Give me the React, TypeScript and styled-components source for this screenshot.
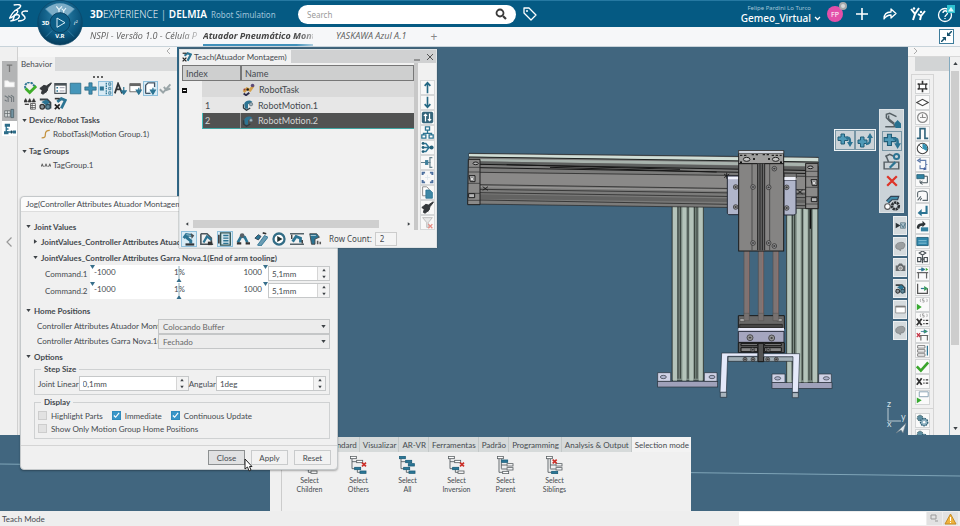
import React, { useState } from "react";
import styled, { createGlobalStyle, css } from "styled-components";

const teal = "#2c7493";
const ink = "#454a4f";
const sky = "#41667f";

const GlobalStyle = createGlobalStyle`
  *, *::before, *::after { box-sizing: border-box; }
  body { margin: 0; font-family: Lato, "Open Sans", sans-serif; font-size: 8px; color: ${ink}; }
  button, input, select { font: inherit; color: inherit; margin: 0; padding: 0; border-radius: 0; }
  button { background: none; border: 0; }
  h1, h2, h3, p, ul { margin: 0; padding: 0; font: inherit; list-style: none; }
`;

/* ---------- icons ---------- */

const arm = (
  <>
    <path d="M2 7 5 3l6 1M6 4v3l4 3v3" fill="none" stroke={teal} strokeWidth="3.400" />
    <path d="M4 13h10v2.500H4z" fill="#2f3437" />
    <path d="M10 1l4 3-3 4z" fill="#4a5054" />
    <path d="M5 3l5 1" stroke="#a7c8d6" />
  </>
);

const icons: Record<string, React.ReactNode> = {
  check: (
    <>
      <path d="M2 8a5 5 0 0 1 9-5l3 3" fill="none" stroke={teal} strokeWidth="2.400" strokeDasharray="3 1" />
      <path d="M2 8l5 5 8-8" fill="none" stroke="#3fae2a" strokeWidth="3.400" />
    </>
  ),
  brush: <path d="M15 1 9 5 6 4 1 8l3 2-1 4 2 1 5-4 1-4 4-5zM2 8l7 5" fill="#35393c" stroke="#35393c" strokeWidth="1.200" />,
  panel: (
    <>
      <path d="M1 2h14v12H1z" fill="#fff" stroke="#4b5358" strokeWidth="1.400" />
      <path d="M1 2h14v2.500H1z" fill="#4b5358" />
      <path d="M3 7h2M3 11h2" stroke={teal} strokeWidth="2" />
      <path d="M7 7h6M7 11h6" stroke="#889" />
    </>
  ),
  box: <path d="M1.500 1.500h13v13h-13z" fill="#4596ba" stroke="#2b6c88" />,
  plus: <path d="M6 1h4v5h5v4h-5v5H6v-5H1V6h5z" fill="#3f8fb3" stroke="#245f7a" strokeWidth=".8" />,
  nodes: (
    <>
      <path d="M1 5.500h5v5H1z" fill={teal} />
      <path d="M9 1v14" stroke={teal} strokeWidth="1.600" strokeDasharray="2 1" />
      <path d="M12 1h2.500v3H12zM12 6.500h2.500v3H12zM12 12h2.500v3H12z" fill="none" stroke={teal} />
    </>
  ),
  text: (
    <>
      <path d="M1 14 5 2l5 12M3 9h5" fill="none" stroke="#303437" strokeWidth="2.200" />
      <path d="M12 6v6m-3-1 3 4 3-4z" fill={teal} stroke={teal} strokeWidth="1.500" />
    </>
  ),
  windowDown: (
    <>
      <path d="M1 2h13v10H1z" fill="#fff" stroke="#555" />
      <path d="M1 2h13v3H1z" fill="#666" />
      <path d="M12 7v4m-3-1 3 5 3-5z" fill={teal} stroke={teal} strokeWidth="1.400" />
    </>
  ),
  pageDown: (
    <>
      <path d="M2 14V4l3-3h8v5M2 14h6" fill="#fff" stroke="#456" strokeWidth="1.600" />
      <path d="M11 7v4m-3-1 3 5 3-5z" fill={teal} stroke={teal} strokeWidth="1.400" />
    </>
  ),
  fade: <path d="M1 9l4 4 9-10M6 6l3 4 5-2" fill="none" stroke="#9aa5a8" strokeWidth="2.400" />,
  tags: (
    <>
      <path d="M0 6l2-4 2 4zM5 6l2-4 2 4zM10 6l2-4 2 4z" fill="#333" stroke="#333" />
      <path d="M8 8h6v7H8zM8 10.500h6M8 13h6M10 8v7" fill="#fff" stroke="#555" />
      <path d="M1 9h5" stroke="#333" strokeWidth="1.500" />
    </>
  ),
  tagLine: <path d="M0 11l2-5 2 5M6 11l2-5 2 5M12 11l2-5 2 5M1 9h2M7 9h2M13 9h2" fill="none" stroke="#555" strokeWidth="1.300" />,
  robotA: (
    <>
      <path d="M1 3h9l4 4v7" fill="none" stroke="#3b4347" strokeWidth="2.400" />
      <path d="M3 6l6-3 4 3-3 5z" fill={teal} />
      <circle cx="4" cy="12" r="2.800" fill="#8a9499" stroke="#333" strokeWidth="1.500" />
      <circle cx="11" cy="12" r="2.800" fill="#5f8698" stroke="#2c4d5c" strokeWidth="1.500" />
    </>
  ),
  robotB: (
    <>
      <path d="M4 6l5-4 5 2-3 6-2 4" fill="none" stroke={teal} strokeWidth="3.400" />
      <path d="M1 2h6" stroke="#333" strokeWidth="2" />
      <path d="M1 9l6 6M1 15l6-6" stroke="#222" strokeWidth="2" />
    </>
  ),
  robotC: arm,
  robotD: (
    <>
      <path d="M1 2h7l5 5v7M1 2v12h14" fill="none" stroke="#4c565c" strokeWidth="1.800" />
      <path d="M4 12l4-7 5 4" fill="none" stroke={teal} strokeWidth="2.600" />
      <path d="M9 11h5v4H9z" fill="#333" />
    </>
  ),
  robotE: (
    <>
      <path d="M2 12l4-7 4 1 3 6" fill="none" stroke={teal} strokeWidth="3" />
      <path d="M1 13h5M11 13h5" stroke="#333" strokeWidth="2.400" />
      <circle cx="7" cy="4" r="2.600" fill="#586066" />
    </>
  ),
  robotF: (
    <>
      <path d="M4 15l8-11 4 2-8 10z" fill="#6b9cb3" stroke={teal} />
      <path d="M1 7l4-4 3 2-3 4z" fill={teal} stroke="#345" />
      <path d="M10 1l4 1" stroke="#333" strokeWidth="2" />
    </>
  ),
  robotG: (
    <>
      <path d="M0 2h16M0 14h16" stroke="#56646b" strokeWidth="1.500" />
      <path d="M3 11l4-6 5 2v5" fill="none" stroke={teal} strokeWidth="3.200" />
      <path d="M2 3v5M14 9v4" stroke="#333" strokeWidth="1.500" />
    </>
  ),
  robotH: (
    <>
      <path d="M2 2h8l3 4-5 2v6H4z" fill={teal} stroke="#444" />
      <path d="M3 4h6" stroke="#b5d0da" />
      <path d="M11 10v4M14 11v3" stroke="#555" strokeWidth="1.800" />
    </>
  ),
  listBox: (
    <>
      <path d="M3 1h11v14H3z" fill="#d7e8ef" stroke="#355" strokeWidth="1.600" />
      <path d="M6 4h6M6 7h6M6 10h6M6 13h6" stroke={teal} strokeWidth="1.600" />
      <path d="M1 3v10" stroke="#333" strokeWidth="1.800" />
    </>
  ),
  playRing: (
    <>
      <circle cx="8" cy="8" r="6.300" fill="#fff" stroke="#326d86" strokeWidth="2.600" />
      <path d="M6 4.500l6 3.500-6 3.500z" fill="#233" />
    </>
  ),
  task: (
    <>
      <path d="M2 11l4-4 4 2 4-6" fill="none" stroke="#d4a04a" strokeWidth="3.400" />
      <path d="M2 13l3 2 4-3" fill="none" stroke="#2d2d4d" strokeWidth="2.400" />
      <circle cx="13" cy="3" r="2.200" fill="#5c4a7a" />
      <circle cx="7" cy="8" r="1.500" fill="#222" />
      <circle cx="3" cy="8" r="1.200" fill="#a0413c" />
    </>
  ),
  motion: (
    <>
      <path d="M3 6c2-5 9-5 11-2l-6 3v6H4z" fill={teal} />
      <path d="M2 7v5l4 3 5-3" fill="none" stroke="#2e3b42" strokeWidth="1.800" />
      <circle cx="12" cy="7" r="2.200" fill="#9fb3bd" stroke="#4a5b64" strokeWidth=".8" />
    </>
  ),
  up: <path d="M8 15V2M4.500 6 8 2l3.500 4" fill="none" stroke="#236884" strokeWidth="2" />,
  down: <path d="M8 1v13M4.500 10 8 14l3.500-4" fill="none" stroke="#236884" strokeWidth="2" />,
  swap: (
    <>
      <rect x="1" y="1" width="14" height="14" rx="2" fill="#35657b" />
      <path d="M5.500 13V4m-2 2 2-2 2 2M10.500 3v9m-2-2 2 2 2-2" fill="none" stroke="#fff" strokeWidth="1.500" />
    </>
  ),
  hierarchy: (
    <>
      <path d="M8 5v4M3 12V9h10v3" fill="none" stroke={teal} strokeWidth="1.600" />
      <path d="M5.500 1h5v4h-5zM1 11h5v4H1zM10 11h5v4h-5z" fill="#fff" stroke={teal} strokeWidth="1.600" />
    </>
  ),
  merge: (
    <>
      <path d="M3 3h3l4 5-4 5H3M3 8h11" fill="none" stroke={teal} strokeWidth="1.800" />
      <circle cx="2.500" cy="3" r="1.700" fill="#246079" />
      <circle cx="2.500" cy="8" r="1.700" fill="#246079" />
      <circle cx="2.500" cy="13" r="1.700" fill="#246079" />
      <circle cx="13" cy="8" r="2.500" fill="#246079" />
    </>
  ),
  split: (
    <>
      <path d="M0 8h12M14 2h-3v12h3" fill="none" stroke="#64818e" strokeWidth="1.500" />
      <path d="M5 5h4v6H5z" fill="#3f7f9b" />
    </>
  ),
  corners: (
    <>
      <path d="M2 5V2h3M11 2h3v3M14 11v3h-3M5 14H2v-3" fill="none" stroke="#4c6f9e" strokeWidth="2.400" />
      <path d="M5 8h6M8 5v6" stroke="#dbe5ec" />
    </>
  ),
  pages: (
    <>
      <path d="M2 1h5l3 3v8H2z" fill="#fff" stroke="#777" />
      <path d="M6 5h5l3 3v7H6z" fill="#3f88a6" stroke={teal} />
    </>
  ),
  filterOff: (
    <>
      <path d="M2 2h12l-5 6v6H7V8z" fill="#e8e8e8" stroke="#b5b5b5" />
      <path d="M9 10l5 5M14 10l-5 5" stroke="#e78b82" strokeWidth="1.600" />
    </>
  ),
  gear: (
    <>
      <path d="M8 1v14M2 4.500l12 7M14 4.500l-12 7" stroke="#333" strokeWidth="2" />
      <path d="M4 5h8v6H4z" fill="#fff" stroke="#333" strokeWidth="1.500" />
    </>
  ),
  diamond: <path d="M1 8l7-4 7 4-7 4z" fill="#fff" stroke="#444" strokeWidth="1.300" />,
  clock: (
    <>
      <circle cx="8" cy="8" r="6" fill="none" stroke="#888" strokeWidth="1.500" />
      <path d="M8 4v4h4M5 8h2" fill="none" stroke="#888" strokeWidth="1.400" />
    </>
  ),
  pulse: <path d="M1 14h4V2h6v12h4" fill="none" stroke="#31647c" strokeWidth="2" />,
  timer: (
    <>
      <circle cx="8" cy="8" r="6.500" fill="#fff" stroke="#444" strokeWidth="1.300" />
      <path d="M8 8V2a6 6 0 0 1 5 9z" fill="#3594b5" />
      <path d="M8 8 4 4" stroke="#333" />
    </>
  ),
  loop: (
    <>
      <path d="M5 3h7v5l2 0M12 8v5H5V9M2 3l3-2v4z" fill="none" stroke="#617cab" strokeWidth="1.400" />
      <path d="M10 11l3 3-4 1z" fill="#4560a0" />
    </>
  ),
  call: (
    <>
      <path d="M1 2h9v5H1z" fill="#3184a4" stroke="#245c72" />
      <path d="M10 4h4v8H5v-3M8 10l-3 2 3 2" fill="none" stroke="#46545b" strokeWidth="1.200" />
    </>
  ),
  curve: <path d="M2 10V5c0-3 12-4 12 1v8H8M2 14l4-5M5 14l2-3" fill="none" stroke="#56636a" strokeWidth="1.300" />,
  enter: (
    <>
      <path d="M13 2v9H6" fill="none" stroke={teal} strokeWidth="2.600" />
      <path d="M7 6l-5 5 5 4z" fill={teal} />
    </>
  ),
  jump: (
    <>
      <path d="M6 9h9v5H6z" fill="#35809f" />
      <path d="M1 10c0-5 3-6 7-6V1l4 4-4 4V7C5 7 4 8 4 11z" fill="#2d3336" />
    </>
  ),
  block: (
    <>
      <path d="M1 3h14v10H1z" fill="#2f86aa" stroke="#1e5a74" />
      <path d="M3 7h10M3 10h10" stroke="#9cd0e2" />
    </>
  ),
  branch: <path d="M8 0l4 2.500L8 5 4 2.500zM8 5v10M2 8h4v5H2zM10 8h4v5h-4zM6 10h4" fill="none" stroke="#485055" strokeWidth="1.400" />,
  signal: (
    <>
      <path d="M3 14V7h10v7M1 7h14" fill="none" stroke="#666" strokeWidth="1.500" />
      <path d="M3 3h6M7 1l4 2-4 2z" fill={teal} stroke={teal} />
      <path d="M12 1l3 2-3 2z" fill="#3ead35" />
    </>
  ),
  axisOut: (
    <>
      <path d="M2 2v12h12V8" fill="none" stroke="#555" strokeWidth="1.500" />
      <path d="M6 8h4" stroke={teal} strokeWidth="1.500" />
      <path d="M10 5l5 3-5 3z" fill="#3a9a5c" />
    </>
  ),
  playGreen: (
    <>
      <path d="M1 7l6 4-6 4z" fill="#37a930" />
      <path d="M6 1C5 2 5 4 6 5M10 1H8v2h2v2H8M13 1c1 1 1 3 0 4" fill="none" stroke="#999" />
    </>
  ),
  assignS: (
    <>
      <path d="M1 7l6 8M7 7l-6 8" stroke="#333" strokeWidth="2.200" />
      <path d="M9 9h1.500M9 13h1.500M12 9h3M12 13h3" stroke="#333" strokeWidth="1.500" />
      <path d="M6 1C5 2 5 4 6 5M10 1H8v2h2v2H8M13 1c1 1 1 3 0 4" fill="none" stroke="#999" />
    </>
  ),
  assign: (
    <>
      <path d="M1 4l6 8M7 4l-6 8" stroke="#333" strokeWidth="2.200" />
      <path d="M9 6h1.500M9 10h1.500M12 6h3M12 10h3" stroke="#333" strokeWidth="1.500" />
    </>
  ),
  signalOff: (
    <>
      <path d="M6 14V8h8v6M4 8h11" fill="none" stroke="#666" strokeWidth="1.400" />
      <path d="M1 5l4 5M5 5l-4 5" stroke="#c73244" strokeWidth="1.500" />
      <path d="M6 3h4M10 1l4 2-4 2z" fill="#3ead35" stroke={teal} />
    </>
  ),
  list: (
    <>
      <path d="M2 2h9v3H2zM2 7h9v3H2zM2 12h9v3H2z" fill="#fff" stroke="#666" />
      <path d="M14 2v12" stroke={teal} strokeWidth="1.500" />
    </>
  ),
  tick: <path d="M1 8l5 5 9-10" fill="none" stroke="#3aa52c" strokeWidth="3.200" />,
  commentPlay: (
    <>
      <path d="M4 1h11v6H4z" fill="#fff" stroke="#7593a6" />
      <path d="M1 8l6 3.500L1 15z" fill="#37a930" />
    </>
  ),
  gears: (
    <>
      <circle cx="5" cy="5" r="3.500" fill="#5f8ea2" stroke="#355" strokeDasharray="2 1" />
      <circle cx="10" cy="10" r="4.500" fill="#8fb2c2" stroke="#2b5d73" strokeWidth="1.600" strokeDasharray="2 1" />
      <circle cx="10" cy="10" r="1.500" fill="#fff" />
    </>
  ),
  letterT: <path d="M4 3h8M8 3v10" fill="none" stroke="#777" strokeWidth="1.800" />,
  folder: <path d="M1 4h5l2 2h7v7H1z" fill="#fafafa" stroke="#e4e4e4" />,
  arms: <path d="M1 4l5 3v6M6 4l5 3v6M10 3l4 3v7M1 10l3 2" fill="none" stroke="#6f777b" strokeWidth="1.500" />,
  cabinet: (
    <>
      <path d="M1 4h8v9H1zM1 8h8M5 4v9" fill="#d5d9da" stroke="#5b6165" />
      <path d="M10 2h4v12h-4z" fill="#7394a3" stroke="#43565f" />
    </>
  ),
  flow: (
    <>
      <path d="M3 3v9h12M3 8h3" fill="none" stroke={teal} strokeWidth="1.800" />
      <path d="M1 1h7v4H1zM0 11h6v4H0z" fill="#2d6c88" />
      <path d="M9 10h2v4H9z" fill="#1b4458" />
      <path d="M12 10h4v4h-4z" fill="#2d6c88" />
    </>
  ),
  taskCurve: <path d="M1 14c6 0 6-2 6-6s2-6 7-6" fill="none" stroke="#c4923e" strokeWidth="2" />,
  addPoint: (
    <>
      <path d="M4 2h3.500v3H11v3.500H7.500V12H4V8.500H1V5h3z" fill="#4f9ab8" stroke="#215d77" />
      <path d="M9 6c4-1 4 1 4 5" fill="none" stroke={teal} strokeWidth="2.400" />
      <path d="M10 10h6l-3 5z" fill={teal} />
    </>
  ),
  addPointUp: (
    <>
      <path d="M3.500 5H7v3h3v3.500H7V15H3.500v-3.500H1V8h2.500z" fill="#4f9ab8" stroke="#215d77" />
      <path d="M9 12c4 0 4-2 4-6" fill="none" stroke={teal} strokeWidth="2.400" />
      <path d="M10 6h6l-3-5z" fill={teal} />
    </>
  ),
  armHome: (
    <>
      <path d="M2 14h8v-2L6 9 3 6V3l3-1 6 3M5 4v3l5 4" fill="none" stroke="#555f64" strokeWidth="1.300" />
      <path d="M10 11l3-3 3 3v4h-5z" fill="#27708f" />
    </>
  ),
  armEdit: (
    <>
      <path d="M2 4l4-2 4 2M3 4l2 5M1 9h13v6H1z" fill="none" stroke="#555f64" strokeWidth="1.300" />
      <circle cx="12" cy="4" r="2.300" fill="none" stroke={teal} strokeWidth="1.800" />
      <path d="M6 14l5-5" stroke={teal} strokeWidth="2" />
    </>
  ),
  cross: <path d="M2.500 2.500l11 11M13.500 2.500l-11 11" stroke="#dd3428" strokeWidth="2.600" />,
  armGear: (
    <>
      <path d="M3 7l4-4h7l-1 3H8L5 9" fill="#418aa7" stroke="#345" />
      <circle cx="11" cy="11.500" r="3" fill="none" stroke="#2b2f33" strokeWidth="2.400" strokeDasharray="2 .5" />
      <circle cx="4" cy="12" r="2.500" fill="#fff" stroke="#555" />
    </>
  ),
  flag: (
    <>
      <path d="M1 4l7 4-7 4z" fill="#2c3438" />
      <path d="M8 4h7v8H8z" fill="#a9bfca" stroke="#55707d" />
      <path d="M9 6l3 5 3-6" fill="none" stroke="#2f5a6d" />
    </>
  ),
  shape: <path d="M1 8c0-5 5-6 9-6s5 3 4 6-3 4-5 3l-1 3-3-2c-2 0-4-1-4-4z" fill="#9b9fa1" stroke="#73787b" />,
  camera: (
    <>
      <path d="M1 5h3l2-3h4l2 3h3v8H1z" fill="#666b6e" />
      <circle cx="8" cy="9" r="2.800" fill="#999" stroke="#eee" />
    </>
  ),
  blankWindow: (
    <>
      <path d="M1 3h14v10H1z" fill="#fff" stroke="#777" />
      <path d="M1 3h14v2H1z" fill="#777" />
    </>
  ),
};

const Svg = styled.svg<{ $size: number }>`
  width: ${(p) => p.$size}px;
  height: ${(p) => p.$size}px;
  flex: none;
  display: block;
`;

function Icon({ name, size = 12 }: { name: string; size?: number }) {
  return (
    <Svg $size={size} viewBox="0 0 16 16" aria-hidden="true">
      {icons[name]}
    </Svg>
  );
}

/* ---------- frame ---------- */

const Page = styled.div`
  height: 100vh;
  display: flex;
  flex-direction: column;
  overflow: hidden;
  position: relative;
  background: ${sky};
`;

const TopBar = styled.header`
  flex: none;
  height: 27px;
  display: flex;
  align-items: center;
  padding: 0 0 0 9px;
  background: #055a83;
  border-top: 1px solid #2679a2;
  color: #fff;
  font-family: "Noto Sans", "Open Sans", sans-serif;
`;

const Brand = styled.h1`
  display: flex;
  align-items: baseline;
  margin-left: 61px;
  width: 208px;
  font-size: 10px;
  white-space: nowrap;
  b { font-weight: 700; }
  span { font-family: "Open Sans", sans-serif; font-weight: 300; }
  strong { font-weight: 600; }
  em { font-style: normal; color: #9fc4da; font-size: 8px; margin-left: 4px; }
`;

const SearchBox = styled.label`
  display: flex;
  align-items: center;
  width: 218px;
  height: 19px;
  padding: 0 9px;
  border-radius: 10px;
  background: #fff;
  input {
    flex: 1;
    min-width: 0;
    border: 0;
    outline: 0;
    background: none;
    font-size: 8px;
    color: #444;
  }
  input::placeholder { color: #9a9a9a; opacity: 1; }
`;

const TopButton = styled.button`
  display: grid;
  place-items: center;
  width: 28px;
  height: 24px;
`;

const UserBlock = styled.div`
  margin-left: auto;
  display: flex;
  flex-direction: column;
  align-items: flex-end;
  line-height: 11px;
  small { font-size: 6px; line-height: 8px; color: #a4c6d8; padding-right: 10px; }
  button { display: flex; align-items: center; gap: 3px; font-size: 10px; line-height: 13px; font-weight: 500; }
`;

const Avatar = styled.div`
  position: relative;
  display: grid;
  place-items: center;
  width: 16px;
  height: 16px;
  margin: 0 5px 0 6px;
  border-radius: 50%;
  background: #e34fa9;
  font-size: 7px;
  &::after {
    content: "";
    position: absolute;
    top: -4px;
    right: -4px;
    width: 8px;
    height: 8px;
    border-radius: 50%;
    background: #d5d9db;
    border: 2px solid #a6a9ab;
  }
`;

const Compass = styled.button`
  position: absolute;
  left: 37px;
  top: 0;
  z-index: 5;
  font-family: "Noto Sans", sans-serif;
`;

const TabStrip = styled.nav`
  flex: none;
  height: 20px;
  display: flex;
  align-items: stretch;
  padding: 0 6px 0 90px;
  background: #f6f7f9;
  border-bottom: 1px solid #c8d3da;
  font-family: "Open Sans", "Noto Sans", sans-serif;
`;

const DocTab = styled.button<{ $width: number; $active?: boolean }>`
  width: ${(p) => p.$width}px;
  margin-right: 6px;
  overflow: hidden;
  white-space: nowrap;
  text-align: left;
  font-size: 9px;
  font-style: italic;
  color: #5c5c5c;
  border-bottom: 2px solid transparent;
  mask-image: linear-gradient(to right, #000 85%, rgba(0, 0, 0, 0.4));
  ${(p) => p.$active && css`
    font-weight: 700;
    color: #444;
    border-bottom-color: #4191bb;
  `}
`;

const PlainTab = styled(DocTab)`
  mask-image: none;
  margin-left: 17px;
`;

const AddTab = styled.button`
  width: 20px;
  font-size: 12px;
  line-height: 16px;
  color: #888;
`;

const Restore = styled.button`
  margin: 2px 0 0 auto;
  width: 15px;
  height: 15px;
  display: grid;
  place-items: center;
  border: 1px solid #3e7c9b;
  background: #fff;
`;

const Work = styled.main`
  flex: 1;
  min-height: 0;
  display: flex;
  position: relative;
`;

/* ---------- left panel ---------- */

const LeftDock = styled.aside`
  width: 179px;
  display: flex;
  background: #f0f0f0;
  border-right: 2px solid #2f6788;
`;

const Rail = styled.div`
  width: 18px;
  padding: 14px 0 0 2px;
  border-right: 1px solid #d0d0d0;
  display: flex;
  flex-direction: column;
`;

const RailButton = styled.button<{ $active?: boolean }>`
  height: 15px;
  display: grid;
  place-items: center;
  background: ${(p) => (p.$active ? "#fff" : "#b3b4b5")};
`;

const Collapse = styled.button`
  margin-top: 96px;
  display: grid;
  place-items: center;
  height: 20px;
`;

const DockBody = styled.div`
  flex: 1;
  min-width: 0;
`;

const DockTop = styled.div`
  height: 10px;
  display: flex;
  justify-content: flex-end;
  padding-right: 4px;
  background: #f6f6f6;
`;

const DockTab = styled.div`
  display: flex;
  height: 14px;
  background: #d9dadb;
  h2 { width: 37px; text-align: center; line-height: 14px; background: #f0f0f0; }
`;

const Dots = styled.div`
  display: flex;
  justify-content: center;
  gap: 2px;
  padding: 5px 0 3px;
  i { width: 2px; height: 2px; border-radius: 50%; background: #333; }
`;

const Tools = styled.div`
  display: flex;
  flex-wrap: wrap;
  padding: 0 4px 1px 5px;
`;

const Tool = styled.button<{ $on?: boolean }>`
  width: 15px;
  height: 15px;
  display: grid;
  place-items: center;
  border: 1px solid ${(p) => (p.$on ? "#8fc0dc" : "transparent")};
  background: ${(p) => (p.$on ? "#d8ebf5" : "transparent")};
`;

const TreeHead = styled.h3`
  display: flex;
  align-items: center;
  gap: 2px;
  height: 16px;
  padding-left: 4px;
  font-weight: 700;
`;

const TreeItem = styled.p`
  display: flex;
  align-items: center;
  gap: 2px;
  height: 12px;
  margin-bottom: 3px;
  padding-left: 23px;
`;

/* ---------- viewport ---------- */

const Viewport = styled.section`
  flex: 1;
  position: relative;
  overflow: hidden;
`;

const Model = styled.svg`
  position: absolute;
  left: 271px;
  top: 83px;
  width: 400px;
  height: 280px;
`;

const Axes = styled.svg`
  position: absolute;
  right: 0;
  bottom: 0;
  width: 24px;
  height: 36px;
`;

const ContextBar = styled.div`
  position: absolute;
  right: 4px;
  top: 62px;
  width: 25px;
  height: 104px;
  display: flex;
  flex-direction: column;
  align-items: center;
  justify-content: space-around;
  background: #cbd3d8;
  border: 1px solid #dde3e6;
`;

const ContextButton = styled.button<{ $boxed?: boolean }>`
  width: 20px;
  height: 20px;
  display: grid;
  place-items: center;
  border: 1px solid ${(p) => (p.$boxed ? "#7896a5" : "transparent")};
`;

const SubBar = styled.div`
  position: absolute;
  right: 32px;
  top: 82px;
  display: flex;
  background: #cbd3d8;
  border: 1px solid #f0f4f6;
`;

const ViewTabs = styled.div`
  position: absolute;
  right: 1px;
  top: 169px;
  display: flex;
  flex-direction: column;
  gap: 2px;
  button {
    width: 14px;
    height: 19px;
    display: grid;
    place-items: center;
    background: #d5dbde;
    border: 1px solid #edf0f2;
  }
`;

/* ---------- right panel ---------- */

const RightDock = styled.aside`
  width: 52px;
  display: grid;
  grid-template-columns: 1fr 11px;
  grid-template-rows: 10px 1fr;
  background: #f0f0f0;
  overflow: hidden;
`;

const RightTop = styled.div`
  grid-column: 1 / 3;
  padding-left: 3px;
  background: #f6f6f6;
  border-bottom: 1px solid #d8d8d8;
`;

const CommandArea = styled.div`
  min-height: 0;
  overflow: hidden;
  &::before { content: ""; display: block; height: 14px; margin: 0 0 3px 7px; background: #d2d4d5; }
`;

const Commands = styled.div`
  margin-left: 3px;
  width: 23px;
  padding: 4px 0 3px;
  border: 1px solid #d5d5d5;
  display: flex;
  flex-direction: column;
  align-items: center;
  justify-content: space-between;
  height: 335px;
  & + & { height: 40px; border-top: 0; justify-content: flex-start; gap: 1px; }
`;

const Command = styled.button`
  width: 15px;
  height: 15px;
  flex: none;
  display: grid;
  place-items: center;
  background: #fafafa;
  border: 1px solid #d3d5d6;
`;

const VScroll = styled.div`
  border-left: 1px solid #82aabf;
  display: flex;
  flex-direction: column;
  align-items: center;
  padding: 4px 0;
  i { width: 8px; height: 274px; margin-top: 5px; background: #cdcdcd; }
  svg:last-child { margin-top: auto; }
`;

/* ---------- teach window ---------- */

const Teach = styled.section`
  position: absolute;
  left: 179px;
  top: 2px;
  z-index: 3;
  width: 258px;
  height: 199px;
  display: grid;
  grid-template-columns: 1fr 18px;
  grid-template-rows: 13px 1fr 17px;
  background: #f1f1f1;
  border: 1px solid #dfe3e5;
  box-shadow: 0 0 1px #344;
`;

const TeachTitle = styled.header`
  grid-column: 1 / 3;
  display: flex;
  align-items: center;
  background: #d0d1d2;
  h2 {
    display: flex;
    align-items: center;
    gap: 2px;
    height: 13px;
    padding: 0 4px 0 2px;
    background: #f1f1f1;
    white-space: nowrap;
  }
  div { margin-left: auto; display: flex; gap: 1px; }
  button { width: 12px; height: 12px; display: grid; place-items: center; }
`;

const GridArea = styled.div`
  min-width: 0;
  padding: 2px 0 0 2px;
  display: flex;
  flex-direction: column;
  border-right: 4px solid #c8c8c8;
`;

const Table = styled.table`
  width: 100%;
  table-layout: fixed;
  border-collapse: separate;
  border-spacing: 0;
  font-size: 9px;
  th {
    height: 16px;
    padding: 0 3px;
    text-align: left;
    font-weight: 400;
    background: #cecfcf;
    border: 1px solid #777;
  }
  td { height: 16px; padding: 0; background: #e7e7e7; white-space: nowrap; }
  td span { display: flex; align-items: center; gap: 4px; padding-left: 1px; }
`;

const Row = styled.tr<{ $tone?: "head" | "selected" }>`
  && td { ${(p) => p.$tone === "head" && "background: #dadada;"} }
  && td:first-child { background: #f1f1f1; }
  && td:nth-child(2) { padding-left: 3px; }
  ${(p) => p.$tone === "selected" && css`
    && td:not(:first-child) { background: #515252; color: #d5d5d5; border-bottom: 1px solid #40a6a4; }
    && td:nth-child(2) { border-left: 1px solid #40c0bd; border-right: 1px solid #999; padding-left: 2px; }
  `}
`;

const HScroll = styled.div`
  margin-top: auto;
  height: 12px;
  display: flex;
  align-items: center;
  padding: 0 3px;
  gap: 4px;
  i { width: 186px; height: 8px; background: #cfcfcf; }
  svg:last-child { margin-left: auto; }
`;

const SideTools = styled.div`
  padding-top: 17px;
  display: flex;
  flex-direction: column;
  align-items: center;
  button { width: 15px; height: 15px; background: #f8f8f8; border: 1px solid #d6d8d9; display: grid; place-items: center; flex: none; }
`;

const TeachFoot = styled.footer`
  grid-column: 1 / 3;
  display: flex;
  align-items: center;
  gap: 2px;
  padding: 0 1px;
  button { width: 16px; height: 16px; }
  label { display: flex; align-items: center; gap: 3px; margin-left: 4px; font-size: 8px; }
  label { font-family: "Noto Sans", sans-serif; }
  input { width: 22px; height: 14px; padding-left: 4px; border: 1px solid #ccc; background: #f4f4f4; }
`;

/* ---------- jog window ---------- */

const Jog = styled.section`
  position: absolute;
  left: 20px;
  top: 149px;
  z-index: 2;
  width: 318px;
  display: flex;
  flex-direction: column;
  background: #f0f0f0;
  border: 1px solid #c4c8ca;
  border-radius: 4px;
  box-shadow: 0 1px 2px rgba(0, 0, 0, 0.3);
`;

const JogTitle = styled.h2`
  height: 15px;
  line-height: 14px;
  padding-left: 5px;
  background: #fbfbfb;
  border-radius: 4px 4px 0 0;
  border-bottom: 1px solid #ddd;
`;

const JogBody = styled.div`
  padding: 7px 7px 4px 1px;
`;

const Heading = styled.h3<{ $sub?: boolean; $space?: number }>`
  display: flex;
  align-items: center;
  gap: 3px;
  height: 15px;
  margin-top: ${(p) => p.$space || 0}px;
  padding-left: ${(p) => (p.$sub ? 11 : 4)}px;
  font-weight: 700;
  white-space: nowrap;
`;

const SliderRow = styled.div`
  display: grid;
  grid-template-columns: 45px 178px 1fr;
  align-items: center;
  height: 17px;
  padding-left: 23px;
`;

const Track = styled.div`
  position: relative;
  display: flex;
  justify-content: space-between;
  height: 17px;
  padding: 2px 6px 0 4px;
  background: #fff;
  input { position: absolute; inset: 0; width: 100%; opacity: 0; }
  svg { position: absolute; top: 0; left: 0; width: 100%; height: 17px; }
`;

const SpinBox = styled.span<{ $width?: number }>`
  display: flex;
  ${(p) => (p.$width ? `width: ${p.$width}px;` : "")}
  height: 15px;
  border: 1px solid #c6c8c9;
  background: #fff;
  input { flex: 1; min-width: 0; width: 20px; border: 0; padding-left: 3px; background: none; outline: 0; }
  span { width: 12px; display: flex; flex-direction: column; border-left: 1px solid #d5d5d5; background: #f3f3f3; }
  button { flex: 1; display: grid; place-items: center; }
`;

const PickRow = styled.label`
  display: grid;
  grid-template-columns: 121px 1fr;
  height: 15px;
  padding-left: 15px;
  line-height: 14px;
  > span { overflow: hidden; white-space: nowrap; }
`;

const HomeRows = styled.div`
  padding-top: 1px;
`;

const Picker = styled.span`
  position: relative;
  display: block;
  select {
    appearance: none;
    width: 100%;
    height: 15px;
    padding-left: 4px;
    border: 1px solid #c4c6c7;
    background: #ececec;
    color: #666;
  }
  svg { position: absolute; right: 4px; top: 5px; pointer-events: none; }
`;

const Group = styled.fieldset`
  margin: 0 0 2px 12px;
  padding: 2px 3px 3px 3px;
  border: 1px solid #cfd1d2;
  min-width: 0;
  legend { margin-left: 3px; padding: 0 3px; font-weight: 700; line-height: 10px; }
`;

const Fields = styled.div`
  display: flex;
  align-items: center;
  justify-content: space-between;
  label { white-space: nowrap; }
  > span:first-child { margin-right: 2px; }
`;

const Checks = styled.div`
  display: flex;
  gap: 9px;
  height: 13px;
  align-items: center;
`;

const Check = styled.label`
  display: flex;
  align-items: center;
  gap: 4px;
  white-space: nowrap;
  input {
    appearance: none;
    width: 9px;
    height: 9px;
    background: #e2e2e2;
    border: 1px solid #cdcdcd;
  }
  input:checked {
    border-color: #318cbd;
    background: #3996c8 url("data:image/svg+xml,%3Csvg xmlns='http://www.w3.org/2000/svg' viewBox='0 0 8 8'%3E%3Cpath d='M1 4l2 2 4-5' fill='none' stroke='white' stroke-width='1.300'/%3E%3C/svg%3E");
  }
`;

const JogFoot = styled.footer`
  display: flex;
  justify-content: flex-end;
  gap: 6px;
  padding: 4px 6px 4px;
  border-top: 1px solid #d4d4d4;
`;

const FootButton = styled.button<{ $focus?: boolean }>`
  width: 37px;
  height: 15px;
  border: 1px solid ${(p) => (p.$focus ? "#8d9091" : "#c9cbcc")};
  background: ${(p) => (p.$focus ? "#e0e1e2" : "#f2f2f2")};
`;

const Pointer = styled.svg`
  position: absolute;
  right: 84px;
  bottom: -3px;
  width: 9px;
  height: 14px;
`;

/* ---------- action bar ---------- */

const Lower = styled.div`
  flex: none;
  height: 76px;
  position: relative;
  display: flex;
  padding: 2px 269px 0 270px;
`;

const Horizon = styled.svg`
  position: absolute;
  inset: 0;
  width: 100%;
  height: 100%;
`;

const ActionBar = styled.section`
  position: relative;
  flex: 1;
  min-width: 0;
  display: flex;
  flex-direction: column;
  background: #f0f0f0;
`;

const ActionTabs = styled.div`
  display: flex;
  justify-content: flex-end;
  height: 15px;
  background: #d6dada;
`;

const ActionTab = styled.button<{ $active?: boolean }>`
  padding: 0 2px 0 3px;
  white-space: nowrap;
  border-right: 1px solid #c3c8c8;
  background: ${(p) => (p.$active ? "#f3f3f3" : "#d6dada")};
  &:last-child { border-right: 0; }
`;

const Actions = styled.div`
  flex: 1;
  margin-left: 11px;
  padding: 4px 0 0 3px;
  display: flex;
  border-left: 1px solid #ccc;
`;

const Action = styled.button`
  width: 49px;
  display: flex;
  flex-direction: column;
  align-items: center;
  font-size: 7px;
  line-height: 9px;
  svg { margin-bottom: 2px; }
`;

const Status = styled.footer`
  flex: none;
  height: 15px;
  display: flex;
  align-items: center;
  gap: 1px;
  padding: 0 2px;
  background: #eeeeee;
  label { flex: 1; }
  input { width: 187px; height: 13px; border: 0; background: #fff; }
  button { width: 15px; height: 13px; display: grid; place-items: center; background: #e2e2e2; }
`;

/* ---------- small drawings ---------- */

function Tri({ dir = "down", size = 5 }: { dir?: "down" | "up" | "left" | "right"; size?: number }) {
  const d = {
    down: "M1 3h14L8 13z",
    up: "M1 13h14L8 3z",
    left: "M13 1v14L3 8z",
    right: "M3 1v14l10-7z",
  }[dir];
  return (
    <Svg $size={size} viewBox="0 0 16 16" aria-hidden="true">
      <path d={d} fill="#3d4246" />
    </Svg>
  );
}

function Chevron({ right, size = 8 }: { right?: boolean; size?: number }) {
  return (
    <Svg $size={size} viewBox="0 0 8 8" aria-hidden="true">
      <path d={right ? "M3 1l3 3-3 3" : "M5 1L2 4l3 3"} fill="none" stroke="#999" strokeWidth=".8" />
    </Svg>
  );
}

function Logo() {
  return (
    <svg width="20" height="20" viewBox="0 0 60 60" aria-label="3DS">
      <path d="M14 3C28 1 36 2 35 6c-1 5-8 9-14 12 6 1 7 4 3 9C17 35 8 41 2 42c7-14 13-21 20-24" fill="none" stroke="#fff" strokeWidth="4" />
      <path d="M4 51c14-1 25-6 27-13 1-6-7-7-14-5l-6 17M57 22c-12-3-20 1-18 7 2 5 11 8 9 14-2 5-12 8-21 8" fill="none" stroke="#fff" strokeWidth="4.500" />
    </svg>
  );
}

function CompassDrawing() {
  return (
    <svg width="46" height="46" viewBox="0 0 138 138" aria-hidden="true">
      <defs>
        <radialGradient id="ball" cx="50%" cy="35%" r="65%">
          <stop offset="0" stopColor="#2f86ae" />
          <stop offset=".7" stopColor="#0b567e" />
          <stop offset="1" stopColor="#063c5b" />
        </radialGradient>
      </defs>
      <circle cx="69" cy="68" r="67" fill="url(#ball)" stroke="#0a4567" strokeWidth="2" />
      <path d="M25 27Q69-8 113 27L89 50a28 28 0 0 0-40 0z" fill="#7cadc7" />
      <circle cx="69" cy="68" r="30" fill="#0c5d86" stroke="#0a4162" strokeWidth="3" />
      <path d="M27 110l18-18M93 92l18 18M24 26l21 20M93 46l20-20" stroke="#418db2" strokeWidth="2" />
      <path d="M60 54v28l24-14z" fill="none" stroke="#d9edf6" strokeWidth="3" />
      <path d="M58 19l8 10v8M75 19l-9 10M74 26l6 6v6M87 24l-7 9" fill="none" stroke="#e9f6fb" strokeWidth="3.500" />
      <text x="14" y="76" fill="#fff" fontSize="18" fontWeight="700">3D</text>
      <text x="110" y="74" fill="#fff" fontSize="18" fontStyle="italic">i²</text>
      <text x="55" y="113" fill="#fff" fontSize="18" fontWeight="700">V.R</text>
    </svg>
  );
}

function Post({ x, top, bottom }: { x: number; top: number; bottom: number }) {
  const h = bottom - top;
  return (
    <g>
      <rect x={x} y={top} width="95" height={h} fill="#7d8b84" stroke="#2b302e" strokeWidth="2" />
      {[3, 31, 52, 80].map((dx) => (
        <rect key={dx} x={x + dx} y={top} width="12" height={h} fill="#b4c3ba" />
      ))}
      {[18, 25, 48, 68, 75].map((dx) => (
        <path key={dx} d={`M${x + dx} ${top}v${h - 6}`} stroke="#303934" strokeWidth="3" />
      ))}
    </g>
  );
}

function Foot({ x, y }: { x: number; y: number }) {
  return (
    <g stroke="#29303a" strokeWidth="2">
      <path d={`M${x} ${y}h39v26h-39zM${x + 140} ${y}h38v26h-38z`} fill="#cfd2e6" />
      <ellipse cx={x + 17} cy={y + 13} rx="9" ry="5" fill="#aeb3cc" />
      <ellipse cx={x + 163} cy={y + 13} rx="9" ry="5" fill="#aeb3cc" />
      <rect x={x} y={y + 26} width="180" height="17" fill="#9fa1ba" />
    </g>
  );
}

const dots = (points: number[][], r = 7) =>
  points.map(([x, y]) => (
    <g key={`${x}-${y}`} stroke="#252525" strokeWidth="2">
      <circle cx={x} cy={y} r={r} fill="#949496" />
      <path d={`M${x - 4} ${y}h8M${x} ${y - 3}v6`} />
    </g>
  ));

function Gantry() {
  return (
    <Model viewBox="0 0 1200 840" role="img" aria-label="Gantry robot model">
      <Foot x={623} y={728} />
      <Foot x={966} y={732} />
      <Post x={666} top={225} bottom={752} />
      <Post x={1009} top={230} bottom={757} />
      <path d="M1081 238v58" stroke="#111" strokeWidth="4" />
      <path d="M57 70l1048 12v154L57 222z" fill="#7b7b7a" stroke="#222" strokeWidth="2" />
      <path d="M57 72l1048 12v12L57 80z" fill="#d0ddd5" />
      <path d="M57 81l1048 15" stroke="#1f2422" strokeWidth="3" />
      <path d="M57 86l1048 14v9L57 94z" fill="#a8b3ad" />
      <path d="M90 94l1012 17v11L90 104z" fill="#5e605f" />
      <path d="M90 103l1012 19M90 113l1012 18M170 104l520 14M300 112l500 14" stroke="#171717" strokeWidth="3" />
      <path d="M90 127l976 12v40L90 164z" fill="#8a8988" />
      <path d="M90 127l976 12M90 164l976 15M90 178l976 14M90 188l976 15M90 210l976 17" stroke="#2b2b2b" strokeWidth="2.500" />
      <path d="M90 170l976 14" stroke="#979695" strokeWidth="4" />
      <path d="M90 193l976 16v10L90 207z" fill="#636362" />
      <path d="M55 88h35v136H53z" fill="#8b8a89" stroke="#1e1e1e" strokeWidth="3" />
      <path d="M55 112h35M54 126h36M54 160h36M54 190h36M54 211h36" stroke="#2a2a2a" strokeWidth="2" />
      <path d="M1067 100h37v136h-37z" fill="#8b8a89" stroke="#1e1e1e" strokeWidth="3" />
      <path d="M1067 124h37M1067 140h37M1067 172h37M1067 200h37M1067 222h37" stroke="#2a2a2a" strokeWidth="2" />
      <g fill="#b5b5b6" stroke="#1c1c1c" strokeWidth="3">
        <ellipse cx="77" cy="100" rx="8" ry="4" />
        <ellipse cx="1081" cy="112" rx="8" ry="4" />
        <path d="M57 137h18v18H61zM56 191h18v12H56zM1083 149h18v18h-14zM1084 203h17v12h-17z" />
      </g>
      <circle cx="66" cy="147" r="5" fill="#ddd" stroke="#222" />
      <circle cx="1092" cy="159" r="5" fill="#ddd" stroke="#222" />
      <path d="M98 170l16 11M98 181l16-11M1042 180l16 12M1042 192l16-12M822 132l16 11M822 143l16-11M830 128v18" stroke="#171717" strokeWidth="2.500" />

      <path d="M1003 130h36v14h-36z" fill="#777" stroke="#222" strokeWidth="2" />
      <path d="M832 138h35v116h-31l-4-4zM1002 150h36v100l-5 5h-31z" fill="#b0b5ca" stroke="#242936" strokeWidth="3" />
      <path d="M834 140h32v8h-32zM1003 141h34v9h-34z" fill="#eef0fa" />
      {dots([[857, 171], [857, 231], [1010, 172], [1010, 234]])}

      <path d="M882 362h16v210h-16zM925 362h16v210h-16zM969 362h17v210h-17z" fill="#7d7474" stroke="#554e4f" strokeWidth="2" />
      <path d="M895 364v206M938 364v206M983 364v206" stroke="#9a6f68" strokeWidth="2" />

      <path d="M866 62h135v39H866z" fill="#a09f9e" stroke="#1e1e1e" strokeWidth="3" />
      <path d="M866 62h135v8H866z" fill="#e7ecf7" stroke="#333" strokeWidth="2" />
      <path d="M870 76h24M905 74h24M938 74h20M965 76h30" stroke="#222" strokeWidth="4" strokeDasharray="7 5" />
      <g fill="#c6c6c6" stroke="#222" strokeWidth="3">
        <ellipse cx="890" cy="88" rx="10" ry="6" />
        <ellipse cx="977" cy="88" rx="10" ry="6" />
      </g>
      <circle cx="912" cy="87" r="3" />
      <circle cx="957" cy="87" r="3" />
      <circle cx="873" cy="97" r="3" />
      <circle cx="993" cy="97" r="3" />
      <rect x="866" y="101" width="135" height="262" fill="#858483" stroke="#1b1b1b" strokeWidth="3" />
      <path d="M906 101v260M959 101v260" stroke="#323232" strokeWidth="2" />
      <path d="M921 101h23v260h-23z" fill="#696969" />
      <path d="M923 101v260M930 101v260M937 101v260M944 101v260" stroke="#171717" strokeWidth="2.500" />
      {dots([[909, 171], [956, 172], [909, 339], [956, 339], [973, 116], [973, 348]])}

      <path d="M865 557h138v40H865z" fill="#696969" stroke="#1b1b1b" strokeWidth="3" />
      <path d="M870 566h14v8h-14zM982 566h14v8h-14z" fill="#aaa" stroke="#222" />
      <path d="M869 583h128v10H869z" fill="#454545" stroke="#1b1b1b" strokeWidth="2" />
      <path d="M882 550h16v22h-16zM925 550h16v22h-16zM969 550h17v22h-17z" fill="#777170" stroke="#444" />
      <path d="M865 594h137v10H865z" fill="#e8eafa" />
      <path d="M865 604h137v33H865z" fill="#a5a6bf" stroke="#292c3a" strokeWidth="3" />
      {dots([[900, 623], [965, 624]], 9)}
      <path d="M865 638h138v30H865z" fill="#5b5b5b" stroke="#181818" strokeWidth="3" />
      <path d="M873 641h50v6h-50zM944 641h50v6h-50zM873 653h50v12h-50zM944 653h50v12h-50z" fill="#868686" stroke="#151515" strokeWidth="3" />
      <path d="M834 680h90v14h-90zM941 680h90v14h-90z" fill="#a2afb7" stroke="#252b30" strokeWidth="2" />
      <path d="M924 640h17v55h-17z" fill="#535353" stroke="#161616" strokeWidth="3" />
      {dots([[908, 659], [955, 659], [885, 688], [909, 688], [953, 688], [979, 688]], 6)}
      <path d="M815 669h108v10h-90l-4 108h-19zM941 671h108l-4 116h-18l2-107h-88z" fill="#e5e9fa" stroke="#26303d" strokeWidth="2" />
      <path d="M811 787h19v15h-19zM1027 788h18v15h-18z" fill="#a9b4bd" stroke="#26303d" strokeWidth="2" />
    </Model>
  );
}

const actionTrees: Record<string, { fills: string[]; cross?: [number, number] }> = {
  Children: { fills: ["#fff", "#fff", "#2b7898", "#fff"] },
  Others: { fills: ["#fff", "#fff", "#2b7898", "#2b7898"], cross: [36, 20] },
  All: { fills: ["#2b7898", "#2b7898", "#2b7898", "#2b7898"] },
  Inversion: { fills: ["#fff", "#fff", "#2b7898", "#fff"], cross: [36, 20] },
  Parent: { fills: ["#fff", "#2b7898", "#fff", "#fff"] },
  Siblings: { fills: ["#fff", "#fff", "#fff", "#2b7898"], cross: [20, 11] },
};

function TreePicture({ kind }: { kind: string }) {
  const { fills, cross } = actionTrees[kind];
  const flat = kind === "Parent" || kind === "Siblings";
  const spots = flat
    ? [[1, 1], [14, 12], [30, 23], [17, 46]]
    : [[1, 1], [20, 13], [14, 34], [30, 45]];
  const boxes = kind === "All" ? [...spots, [28, 23]] : spots;
  return (
    <svg width="17" height="18" viewBox="0 0 51 54" aria-hidden="true">
      <path d={flat ? "M6 8v41h11M13 8v30M13 27h16M13 39h16" : "M6 8v30h9M6 17h14M22 40v9h8"} fill="none" stroke="#4e565a" strokeWidth="2.500" />
      {boxes.map(([x, y], i) => {
        const fill = fills[i] || "#2b7898";
        if (kind === "Siblings" && i === 1) return null;
        return (
          <rect key={i} x={x} y={y} width="18" height="7" fill={fill} stroke={fill === "#fff" ? "#575d60" : "#1c5d79"} strokeWidth="2.500" />
        );
      })}
      {flat && <rect x="30" y="35" width="18" height="7" fill="#fff" stroke="#575d60" strokeWidth="2.500" />}
      {cross && (
        <path d={`M${cross[0]} ${cross[1]}l12 11M${cross[0] + 12} ${cross[1]}l-12 11`} stroke="#cc2e27" strokeWidth="5" />
      )}
    </svg>
  );
}

/* ---------- pieces ---------- */

function Spin({ id, value, width, label }: { id: string; value: string; width?: number; label?: string }) {
  return (
    <SpinBox $width={width}>
      <input id={id} defaultValue={value} aria-label={label} />
      <span>
        <button aria-label="Increase"><Tri dir="up" size={4} /></button>
        <button aria-label="Decrease"><Tri size={4} /></button>
      </span>
    </SpinBox>
  );
}

function CommandSlider({ name }: { name: string }) {
  return (
    <SliderRow>
      <label htmlFor={name}>{name}</label>
      <Track>
        <span>-1000</span>
        <span>1%</span>
        <span>1000</span>
        <svg viewBox="0 0 178 17" preserveAspectRatio="none" aria-hidden="true">
          <path d="M0 0h5l-2.500 4zM173 0h5l-2.500 4zM86.500 17h5L89 13z" fill="#386f8b" />
          <path d="M89 1v12" stroke="#8cabba" strokeWidth="1" />
        </svg>
        <input id={name} type="range" min="-1000" max="1000" defaultValue="5" />
      </Track>
      <Spin id={`${name}-value`} value="5,1mm" label={`${name} value`} />
    </SliderRow>
  );
}

function HomePick({ label, value }: { label: string; value: string }) {
  return (
    <PickRow>
      <span>{label}</span>
      <Picker>
        <select defaultValue={value}>
          <option>{value}</option>
        </select>
        <Tri />
      </Picker>
    </PickRow>
  );
}

function Option({ label, on }: { label: string; on?: boolean }) {
  const [checked, setChecked] = useState(!!on);
  return (
    <Check>
      <input type="checkbox" checked={checked} onChange={() => setChecked(!checked)} />
      {label}
    </Check>
  );
}

const behaviorTools = ["check", "brush", "panel", "box", "plus", "nodes", "text", "windowDown", "pageDown", "fade", "tags", "robotA", "robotB"];
const sideTools = ["up", "down", "swap", "hierarchy", "merge", "split", "corners", "pages", "brush", "filterOff"];
const footTools = ["robotC", "robotD", "listBox", "robotE", "robotF", "playRing", "robotG", "robotH"];
const commands = ["gear", "diamond", "clock", "pulse", "timer", "loop", "call", "curve", "enter", "jump", "block", "branch", "signal", "axisOut", "playGreen", "assignS", "signalOff", "list", "tick", "assign", "commentPlay"];
const viewTabs = ["flag", "shape", "camera", "robotA", "blankWindow", "shape"];
const actionTabs = ["Standard", "Visualizar", "AR-VR", "Ferramentas", "Padrão", "Programming", "Analysis & Output", "Selection mode"];

function TeachWindow() {
  return (
    <Teach>
      <TeachTitle>
        <h2><Icon name="robotB" size={10} />Teach(Atuador Montagem)</h2>
        <div>
          <button aria-label="Minimize">
            <svg width="8" height="8" viewBox="0 0 8 8"><path d="M1 7h6" stroke="#555" /></svg>
          </button>
          <button aria-label="Close window">
            <svg width="8" height="8" viewBox="0 0 8 8"><path d="M1 1l6 6M7 1L1 7" stroke="#555" /></svg>
          </button>
        </div>
      </TeachTitle>
      <GridArea>
        <Table>
          <colgroup>
            <col width="20" />
            <col width="39" />
            <col />
          </colgroup>
          <thead>
            <tr><th colSpan={2}>Index</th><th>Name</th></tr>
          </thead>
          <tbody>
            <Row $tone="head">
              <td>
                <svg width="5" height="5" viewBox="0 0 5 5" aria-label="Collapse"><path d="M0 0h5v5H0z" fill="#111" /><path d="M1 2.500h3" stroke="#fff" /></svg>
              </td>
              <td />
              <td><span><Icon name="task" size={13} />RobotTask</span></td>
            </Row>
            <Row>
              <td /><td>1</td>
              <td><span><Icon name="motion" size={12} />RobotMotion.1</span></td>
            </Row>
            <Row $tone="selected">
              <td /><td>2</td>
              <td><span><Icon name="motion" size={12} />RobotMotion.2</span></td>
            </Row>
          </tbody>
        </Table>
        <HScroll><Tri dir="left" size={4} /><i /><Tri dir="right" size={4} /></HScroll>
      </GridArea>
      <SideTools>
        {sideTools.map((n) => <button key={n} aria-label={n}><Icon name={n} size={13} /></button>)}
      </SideTools>
      <TeachFoot>
        {footTools.map((n, i) => <Tool key={n} $on={i === 0 || i === 2} aria-label={n}><Icon name={n} size={14} /></Tool>)}
        <label>Row Count: <input defaultValue="2" /></label>
      </TeachFoot>
    </Teach>
  );
}

function JogWindow() {
  return (
    <Jog>
      <JogTitle>Jog(Controller Attributes Atuador Montagem(A</JogTitle>
      <JogBody>
        <Heading><Tri />Joint Values</Heading>
        <Heading $sub><Tri dir="right" />JointValues_Controller Attributes Atuador</Heading>
        <Heading $sub $space={1}><Tri />JointValues_Controller Attributes Garra Nova.1(End of arm tooling)</Heading>
        <CommandSlider name="Command.1" />
        <CommandSlider name="Command.2" />
        <Heading $space={4}><Tri />Home Positions</Heading>
        <HomeRows>
          <HomePick label="Controller Attributes Atuador Montag" value="Colocando Buffer" />
          <HomePick label="Controller Attributes Garra Nova.1(En" value="Fechado" />
        </HomeRows>
        <Heading><Tri />Options</Heading>
        <Group>
          <legend>Step Size</legend>
          <Fields>
            <span>Joint</span>
            <label htmlFor="linear">Linear</label>
            <Spin id="linear" value="0,1mm" width={111} />
            <label htmlFor="angular">Angular</label>
            <Spin id="angular" value="1deg" width={111} />
          </Fields>
        </Group>
        <Group>
          <legend>Display</legend>
          <Checks>
            <Option label="Highlight Parts" />
            <Option label="Immediate" on />
            <Option label="Continuous Update" on />
          </Checks>
          <Checks><Option label="Show Only Motion Group Home Positions" /></Checks>
        </Group>
      </JogBody>
      <JogFoot>
        <FootButton $focus>Close</FootButton>
        <FootButton>Apply</FootButton>
        <FootButton>Reset</FootButton>
      </JogFoot>
      <Pointer viewBox="0 0 9 14" aria-hidden="true">
        <path d="M1 1v10l2.500-2 1.500 4 2-1-1.500-3.500H8z" fill="#fff" stroke="#222" />
      </Pointer>
    </Jog>
  );
}

export default function App() {
  return (
    <Page>
      <GlobalStyle />
      <TopBar>
        <Logo />
        <Brand><b>3D</b><span>EXPERIENCE | </span>&nbsp;<strong>DELMIA</strong><em>Robot Simulation</em></Brand>
        <SearchBox>
          <input type="text" placeholder="Search" aria-label="Search" />
          <svg width="12" height="12" viewBox="0 0 12 12" aria-hidden="true">
            <circle cx="5" cy="5" r="3.500" fill="none" stroke="#3b3b3b" strokeWidth="1.800" />
            <path d="M8 8l3 3" stroke="#3b3b3b" strokeWidth="2.200" />
          </svg>
        </SearchBox>
        <TopButton aria-label="Tags">
          <svg width="14" height="14" viewBox="0 0 14 14">
            <path d="M1 1h5l7 7-5 5-7-7z" fill="none" stroke="#fff" strokeWidth="1.300" strokeLinejoin="round" />
            <circle cx="4" cy="4" r="1" fill="#fff" />
          </svg>
        </TopButton>
        <UserBlock>
          <small>Felipe Pardini Lo Turco</small>
          <button>Gemeo_Virtual
            <svg width="7" height="5" viewBox="0 0 7 5" aria-hidden="true"><path d="M1 1l2.500 2.500L6 1" fill="none" stroke="#fff" strokeWidth="1.300" /></svg>
          </button>
        </UserBlock>
        <Avatar>FP</Avatar>
        <TopButton aria-label="Add">
          <svg width="12" height="12" viewBox="0 0 12 12"><path d="M6 0v12M0 6h12" stroke="#fff" strokeWidth="1.600" /></svg>
        </TopButton>
        <TopButton aria-label="Share">
          <svg width="14" height="12" viewBox="0 0 14 12">
            <path d="M1 11c0-5 2-7 7-7V1l5 4.500L8 10V7C5 7 3 8 1 11z" fill="none" stroke="#fff" strokeWidth="1.300" strokeLinejoin="round" />
          </svg>
        </TopButton>
        <TopButton aria-label="Community">
          <svg width="16" height="14" viewBox="0 0 16 14">
            <path d="M1 2l4 5-2 6M9 1L5 7M8 7l3 2-1 4M15 4l-4 5" fill="none" stroke="#fff" strokeWidth="2" />
            <circle cx="4" cy="1.500" r="1.200" fill="#fff" />
            <circle cx="11" cy="5" r="1.200" fill="#fff" />
          </svg>
        </TopButton>
        <TopButton aria-label="Help">
          <svg width="18" height="18" viewBox="0 0 18 18">
            <circle cx="8" cy="10" r="6.500" fill="none" stroke="#fff" strokeWidth="1.300" />
            <path d="M6 8c0-3 4.500-3 4.500 0 0 2-2.500 2-2.500 4M8 13v1" fill="none" stroke="#fff" strokeWidth="1.300" />
            <path d="M10 0h8v8h-8z" fill="#2cc1cf" />
            <path d="M14 2l3 4.500h-6z" fill="#d6fafc" />
          </svg>
        </TopButton>
      </TopBar>
      <Compass aria-label="Compass"><CompassDrawing /></Compass>
      <TabStrip>
        <DocTab $width={107}>NSPI - Versão 1.0 - Célula P</DocTab>
        <DocTab $width={110} $active>Atuador Pneumático Mont</DocTab>
        <PlainTab $width={82}>YASKAWA Azul A.1</PlainTab>
        <AddTab aria-label="New tab">+</AddTab>
        <Restore aria-label="Restore size">
          <svg width="11" height="11" viewBox="0 0 11 11">
            <path d="M11 0L7 4M0 11l4-4" stroke="#16506c" strokeWidth="1.500" />
            <path d="M6 1v4h4zM1 6h4v4z" fill="#16506c" />
          </svg>
        </Restore>
      </TabStrip>
      <Work>
        <LeftDock>
          <Rail>
            {["letterT", "folder", "arms", "cabinet"].map((n) => (
              <RailButton key={n} aria-label={n}><Icon name={n} size={11} /></RailButton>
            ))}
            <RailButton $active aria-label="Behavior"><Icon name="flow" size={12} /></RailButton>
            <Collapse aria-label="Collapse"><Chevron size={12} /></Collapse>
          </Rail>
          <DockBody>
            <DockTop><Chevron /></DockTop>
            <DockTab><h2>Behavior</h2></DockTab>
            <Dots><i /><i /><i /></Dots>
            <Tools>
              {behaviorTools.map((n) => (
                <Tool key={n} $on={n === "nodes" || n === "pageDown"} aria-label={n}><Icon name={n} size={13} /></Tool>
              ))}
            </Tools>
            <TreeHead><Tri />Device/Robot Tasks</TreeHead>
            <TreeItem><Icon name="taskCurve" size={10} />RobotTask(Motion Group.1)</TreeItem>
            <TreeHead><Tri />Tag Groups</TreeHead>
            <TreeItem><Icon name="tagLine" size={10} />TagGroup.1</TreeItem>
          </DockBody>
        </LeftDock>
        <Viewport>
          <Gantry />
          <SubBar>
            <ContextButton $boxed aria-label="Add point after"><Icon name="addPoint" size={16} /></ContextButton>
            <ContextButton $boxed aria-label="Add point before"><Icon name="addPointUp" size={16} /></ContextButton>
          </SubBar>
          <ContextBar>
            {["armHome", "addPoint", "armEdit", "cross", "armGear"].map((n) => (
              <ContextButton key={n} $boxed={n === "addPoint"} aria-label={n}>
                <Icon name={n} size={n === "cross" ? 14 : 18} />
              </ContextButton>
            ))}
          </ContextBar>
          <ViewTabs>
            {viewTabs.map((n, i) => <button key={i} aria-label={n}><Icon name={n} size={11} /></button>)}
          </ViewTabs>
          <Axes viewBox="0 0 24 36" aria-hidden="true">
            <path d="M4 9v13h13" fill="none" stroke="#bccbd3" />
            <path d="M22 24l-3 10-2-3-5 3z" fill="#dde6eb" stroke="#6a7b85" strokeWidth=".6" />
            <text x="3" y="8" fill="#d5e2e9" fontSize="9">z</text>
            <text x="17" y="21" fill="#d5e2e9" fontSize="9">y</text>
            <text x="3" y="28" fill="#d5e2e9" fontSize="9">x</text>
          </Axes>
        </Viewport>
        <RightDock>
          <RightTop><Chevron right /></RightTop>
          <CommandArea>
            <Commands>
              {commands.map((n, i) => <Command key={i} aria-label={n}><Icon name={n} size={13} /></Command>)}
            </Commands>
            <Commands>
              <Command aria-label="gears"><Icon name="gears" size={13} /></Command>
              <Command aria-label="gear options"><Icon name="gears" size={13} /></Command>
            </Commands>
          </CommandArea>
          <VScroll><Tri dir="up" /><i /><Tri /></VScroll>
        </RightDock>
        <TeachWindow />
        <JogWindow />
      </Work>
      <Lower>
        <Horizon viewBox="0 0 960 76" preserveAspectRatio="none" aria-hidden="true">
          <path d="M0 29l960 12" stroke="#7fa5b8" />
        </Horizon>
        <ActionBar>
          <ActionTabs>
            {actionTabs.map((t) => <ActionTab key={t} $active={t === "Selection mode"}>{t}</ActionTab>)}
          </ActionTabs>
          <Actions>
            {Object.keys(actionTrees).map((k) => (
              <Action key={k}><TreePicture kind={k} /><span>Select</span><span>{k}</span></Action>
            ))}
          </Actions>
        </ActionBar>
      </Lower>
      <Status>
        <label htmlFor="command-line">Teach Mode</label>
        <input id="command-line" type="text" />
        <button aria-label="Command history">
          <svg width="9" height="9" viewBox="0 0 9 9"><path d="M1 1h5v4H1zM5 7h3" fill="none" stroke="#999" /></svg>
        </button>
        <button aria-label="Warnings">
          <svg width="13" height="12" viewBox="0 0 13 12"><path d="M6.500 1L12 11H1z" fill="#f0b43e" stroke="#c58a25" /><path d="M6.500 4v4M6.500 9v1" stroke="#fff" /></svg>
        </button>
      </Status>
    </Page>
  );
}
